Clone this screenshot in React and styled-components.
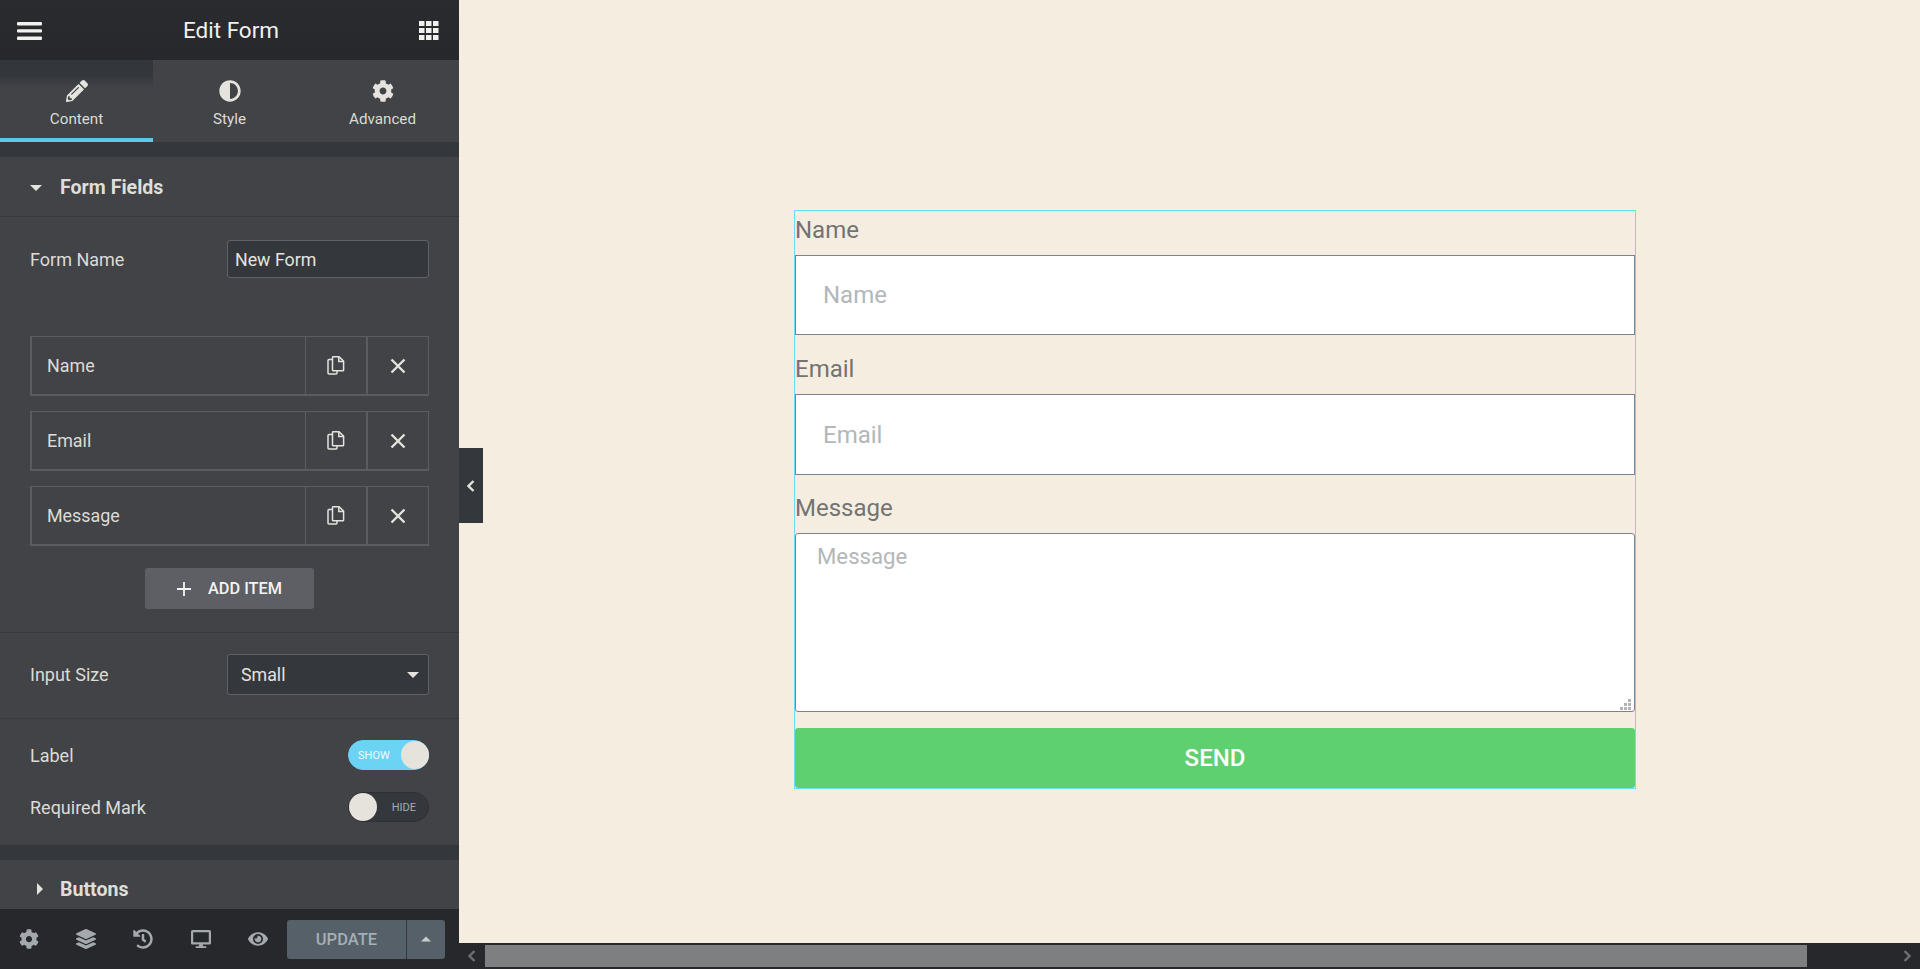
import React from 'react';
import styled, { createGlobalStyle } from 'styled-components';
import { FaPencilAlt, FaAdjust, FaCog, FaLayerGroup, FaHistory, FaDesktop, FaEye } from 'react-icons/fa';

const Global = createGlobalStyle`
  html, body { margin: 0; padding: 0; height: 100%; }
  body { font-family: Roboto, "Liberation Sans", sans-serif; overflow: hidden; background: #f5eee0; }
  * { box-sizing: border-box; }
`;

// 패널
const Page = styled.div`
  display: flex;
  width: 1920px;
  height: 969px;
  position: relative;
`;
const Panel = styled.aside`
  width: 459px;
  height: 100%;
  display: flex;
  flex-direction: column;
  background: #34373b;
  color: #e4e3dd;
`;
const Header = styled.header`
  height: 60px;
  flex: none;
  display: flex;
  align-items: center;
  justify-content: space-between;
  padding: 0 20px 0 17px;
  background: linear-gradient(#2a2b2e, #27282b);
`;
const Title = styled.h1`
  margin: 0;
  font-size: 22.5px;
  font-weight: 400;
  color: #f1f1ee;
`;
const Tabs = styled.nav`
  height: 82px;
  flex: none;
  display: flex;
  background: #414347;
`;
const Tab = styled.div`
  width: 153px;
  display: flex;
  flex-direction: column;
  align-items: center;
  padding-top: 20px;
  gap: 8px;
  font-size: 15.2px;
  color: #dcdbd6;
  border-bottom: 4px solid ${(p) => (p.$active ? '#5bc8ec' : 'transparent')};
  background: ${(p) => (p.$active ? 'linear-gradient(#33363b 0, #33363b 15px, #414347 28px)' : 'none')};
  svg { font-size: 22px; color: #e4e3dd; }
`;
const Body = styled.div`
  flex: 1;
  min-height: 0;
  overflow: hidden;
  padding-top: 15px;
`;
const Section = styled.section`
  background: #414347;
  margin-bottom: 15px;
`;
const SectionTitle = styled.div`
  height: ${(p) => p.$h || 60}px;
  display: flex;
  align-items: center;
  font-size: 19.6px;
  font-weight: 700;
  color: #dfded8;
  padding-left: ${(p) => p.$pad || 30}px;
  padding-top: ${(p) => (p.$line ? 2 : 0)}px;
  gap: ${(p) => p.$gap || 18}px;
  border-bottom: ${(p) => (p.$line ? '1px dotted #2f3135' : 'none')};
`;
const Group = styled.div`
  padding: ${(p) => p.$pad || '23px 30px'};
  border-bottom: ${(p) => (p.$line ? '1px dotted #2f3135' : 'none')};
`;
const Row = styled.div`
  display: flex;
  align-items: center;
  justify-content: space-between;
  font-size: 18px;
  color: #dcdbd6;
  margin-bottom: ${(p) => p.$mb || 0}px;
`;
const TextField = styled.div`
  width: 202px;
  height: 38px;
  display: flex;
  align-items: center;
  padding-left: 7px;
  background: #34373b;
  border: 1px solid #5f6165;
  border-radius: 3px;
  font-size: 17.8px;
  color: #e4e3dd;
`;
const Select = styled(TextField)`
  height: 41px;
  padding: 0 9px 0 13px;
  justify-content: space-between;
`;
const Repeater = styled.div`
  display: flex;
  height: 60px;
  width: 399px;
  border: 2px solid #5a5c60;
  border-top-width: 1px;
  border-right-width: 1px;
  margin-bottom: 15px;
  font-size: 17.9px;
  color: #dcdbd6;
`;
const RepeaterName = styled.div`
  width: 273px;
  display: flex;
  align-items: center;
  padding-left: 15px;
`;
const RepeaterBtn = styled.div`
  flex: 1;
  display: flex;
  align-items: center;
  justify-content: center;
  border-left: ${(p) => p.$w || 1}px solid #5a5c60;
`;
const AddButton = styled.div`
  width: 169px;
  height: 41px;
  margin: 22px auto 0;
  display: flex;
  align-items: center;
  justify-content: center;
  gap: 17px;
  background: #5d5f64;
  border-radius: 3px;
  color: #f4f4f2;
  font-size: 16.3px;
  font-weight: 500;
`;
const Toggle = styled.div`
  position: relative;
  width: 81px;
  height: 30px;
  border-radius: 15px;
  background: ${(p) => (p.$on ? '#6bd3f4' : '#34373b')};
  border: 1px solid ${(p) => (p.$on ? '#6bd3f4' : '#2e3034')};
  color: ${(p) => (p.$on ? '#f2fbfe' : '#a9abac')};
  font-size: 11px;
  display: flex;
  align-items: center;
  justify-content: ${(p) => (p.$on ? 'flex-start' : 'flex-end')};
  padding: 0 12px 0 9px;
`;
const Knob = styled.span`
  position: absolute;
  top: 0;
  width: 28px;
  height: 28px;
  border-radius: 50%;
  background: #e6e3dc;
  ${(p) => (p.$on ? 'right: -1px;' : 'left: 0;')}
`;
const Footer = styled.footer`
  height: 60px;
  flex: none;
  display: flex;
  align-items: center;
  background: #27282b;
`;
const FootIcon = styled.div`
  width: 57.4px;
  display: flex;
  justify-content: center;
  color: #a4a9ad;
  font-size: 20px;
`;
const UpdateGroup = styled.div`
  display: flex;
  height: 39px;
  color: #a4afb7;
  background: #556068;
  border-radius: 3px;
  overflow: hidden;
`;
const UpdateBtn = styled.div`
  width: 120px;
  display: flex;
  align-items: center;
  justify-content: center;
  font-size: 16.5px;
  font-weight: 500;
  border-right: 1px solid #33373b;
`;
const UpdateArrow = styled.div`
  width: 38px;
  display: flex;
  align-items: center;
  justify-content: center;
`;
const Collapse = styled.div`
  position: absolute;
  left: 459px;
  top: 448px;
  width: 24px;
  height: 75px;
  background: #34373b;
  display: flex;
  align-items: center;
  justify-content: center;
`;

// 미리보기
const Canvas = styled.main`
  flex: 1;
  min-width: 0;
  display: flex;
  flex-direction: column;
`;
const Preview = styled.div`
  flex: 1;
  min-height: 0;
  padding: 210px 0 0 335px;
  background: #f5eee0;
`;
const Form = styled.form`
  width: 842px;
  height: 579px;
  border: 1px solid #6fdcf5;
  display: flex;
  flex-direction: column;
`;
const FieldLabel = styled.label`
  display: block;
  height: 44px;
  padding-top: 6px;
  line-height: 27px;
  font-size: 24px;
  color: #737373;
  margin-top: ${(p) => p.$mt || 0}px;
`;
const Input = styled.input`
  display: block;
  width: 100%;
  flex: none;
  height: ${(p) => p.$h}px;
  padding: 0 0 0 27px;
  background: #fff;
  border: 1px solid #78858f;
  border-radius: 0;
  font-family: inherit;
  font-size: 24px;
  outline: none;
  &::placeholder { color: #b2b7b9; opacity: 1; }
`;
const AreaWrap = styled.div`
  position: relative;
  flex: none;
  height: 179px;
`;
const Area = styled.textarea`
  display: block;
  width: 100%;
  height: 100%;
  padding: 9px 21px;
  resize: none;
  background: #fff;
  border: 1px solid #78858f;
  border-radius: 3px;
  font-family: inherit;
  font-size: 22.2px;
  line-height: 26px;
  outline: none;
  &::placeholder { color: #b2b7b9; opacity: 1; }
`;
const Grip = styled.svg`
  position: absolute;
  right: 3px;
  bottom: 1px;
`;
const Send = styled.div`
  height: 60px;
  flex: none;
  margin-top: 16px;
  background: #5fd070;
  border-radius: 3px;
  display: flex;
  align-items: center;
  justify-content: center;
  color: #fff;
  font-size: 24px;
  font-weight: 500;
`;
const Scrollbar = styled.div`
  height: 26px;
  flex: none;
  display: flex;
  align-items: center;
  background: #27282b;
`;
const ScrollArrow = styled.div`
  width: 26px;
  display: flex;
  justify-content: center;
`;
const Thumb = styled.div`
  width: 1322px;
  height: 22px;
  margin-right: auto;
  background: #7e7f81;
`;

const Hamburger = () => (
  <svg width="26" height="18" viewBox="0 0 26 18" fill="#f1f1ee" style={{ marginTop: 2 }}>
    <rect width="25" height="3.4" y="0" rx="1" />
    <rect width="25" height="3.4" y="7.2" rx="1" />
    <rect width="25" height="3.4" y="14.5" rx="1" />
  </svg>
);
const Grid = () => (
  <svg width="20" height="19" viewBox="0 0 20 19" fill="#f1f1ee" style={{ marginTop: 1 }}>
    {[0, 7, 14].map((x) => [0, 7, 14].map((y) => <rect key={`${x}-${y}`} x={x} y={y} width="5.5" height="5" />))}
  </svg>
);
const Caret = ({ dir = 'down', color = '#e4e3dd', size = 12 }) => (
  <svg width={size} height={size} viewBox="0 0 12 12" fill={color}>
    {dir === 'down' && <path d="M0 3h12L6 9z" />}
    {dir === 'right' && <path d="M3 0v12l6-6z" />}
    {dir === 'up' && <path d="M0 9h12L6 3z" />}
  </svg>
);
const CopyIcon = () => (
  <svg width="18" height="19" viewBox="0 0 18 19" fill="none" stroke="#e4e3dd" strokeWidth="1.5">
    <path d="M5.5 3.5H2a1 1 0 0 0-1 1V17a1 1 0 0 0 1 1h7a1 1 0 0 0 1-1v-2" />
    <path d="M5.5 1.5a.8.8 0 0 1 .8-.8H12l4.6 4.4V14a.8.8 0 0 1-.8.8H6.3a.8.8 0 0 1-.8-.8z" />
    <path d="M11.8 1v4.4h4.6" />
  </svg>
);
const CloseIcon = () => (
  <svg width="16" height="16" viewBox="0 0 16 16" stroke="#e4e3dd" strokeWidth="2.4">
    <path d="M1.5 1.5l13 13M14.5 1.5l-13 13" />
  </svg>
);
const Chevron = ({ dir, color }) => (
  <svg width="8" height="12" viewBox="0 0 8 12" fill="none" stroke={color} strokeWidth="2.4">
    <path d={dir === 'left' ? 'M6.5 1L1.5 6l5 5' : 'M1.5 1l5 5-5 5'} />
  </svg>
);

const fields = ['Name', 'Email', 'Message'];

const App = () => (
  <Page>
    <Global />
    <Panel>
      <Header>
        <Hamburger />
        <Title>Edit Form</Title>
        <Grid />
      </Header>
      <Tabs>
        <Tab $active><FaPencilAlt />Content</Tab>
        <Tab><FaAdjust />Style</Tab>
        <Tab><FaCog />Advanced</Tab>
      </Tabs>
      <Body>
        <Section>
          <SectionTitle $line>
            <Caret />
            Form Fields
          </SectionTitle>
          <Group $line>
            <Row $mb={58}>
              Form Name
              <TextField>New Form</TextField>
            </Row>
            {fields.map((f) => (
              <Repeater key={f}>
                <RepeaterName>{f}</RepeaterName>
                <RepeaterBtn><CopyIcon /></RepeaterBtn>
                <RepeaterBtn $w={2}><CloseIcon /></RepeaterBtn>
              </Repeater>
            ))}
            <AddButton>
              <svg width="14" height="14" viewBox="0 0 14 14" stroke="#f4f4f2" strokeWidth="1.8"><path d="M7 0v14M0 7h14" /></svg>
              ADD ITEM
            </AddButton>
          </Group>
          <Group $line $pad="21px 30px 23px">
            <Row>
              Input Size
              <Select>Small<Caret /></Select>
            </Row>
          </Group>
          <Group $pad="21px 30px 23px">
            <Row $mb={22}>
              Label
              <Toggle $on>SHOW<Knob $on /></Toggle>
            </Row>
            <Row>
              Required Mark
              <Toggle>HIDE<Knob /></Toggle>
            </Row>
          </Group>
        </Section>
        <Section>
          <SectionTitle $h={58} $pad={34} $gap={14}>
            <Caret dir="right" />
            Buttons
          </SectionTitle>
        </Section>
      </Body>
      <Footer>
        <FootIcon><FaCog /></FootIcon>
        <FootIcon><FaLayerGroup /></FootIcon>
        <FootIcon><FaHistory /></FootIcon>
        <FootIcon><FaDesktop /></FootIcon>
        <FootIcon><FaEye /></FootIcon>
        <UpdateGroup>
          <UpdateBtn>UPDATE</UpdateBtn>
          <UpdateArrow><Caret dir="up" color="#c8cccc" size={10} /></UpdateArrow>
        </UpdateGroup>
      </Footer>
    </Panel>
    <Collapse><Chevron dir="left" color="#e4e3dd" /></Collapse>
    <Canvas>
      <Preview>
        <Form>
          <FieldLabel>Name</FieldLabel>
          <Input $h={80} placeholder="Name" />
          <FieldLabel $mt={15}>Email</FieldLabel>
          <Input $h={81} placeholder="Email" />
          <FieldLabel $mt={14}>Message</FieldLabel>
          <AreaWrap>
            <Area placeholder="Message" />
            <Grip width="12" height="12" viewBox="0 0 12 12" fill="#b4b4b4">
              <rect x="8" y="0" width="3" height="3" />
              <rect x="4" y="4" width="3" height="3" />
              <rect x="8" y="4" width="3" height="3" />
              <rect x="0" y="8" width="3" height="3" />
              <rect x="4" y="8" width="3" height="3" />
              <rect x="8" y="8" width="3" height="3" />
            </Grip>
          </AreaWrap>
          <Send>SEND</Send>
        </Form>
      </Preview>
      <Scrollbar>
        <ScrollArrow><Chevron dir="left" color="#6e6f71" /></ScrollArrow>
        <Thumb />
        <ScrollArrow><Chevron dir="right" color="#6e6f71" /></ScrollArrow>
      </Scrollbar>
    </Canvas>
  </Page>
);

export default App;
